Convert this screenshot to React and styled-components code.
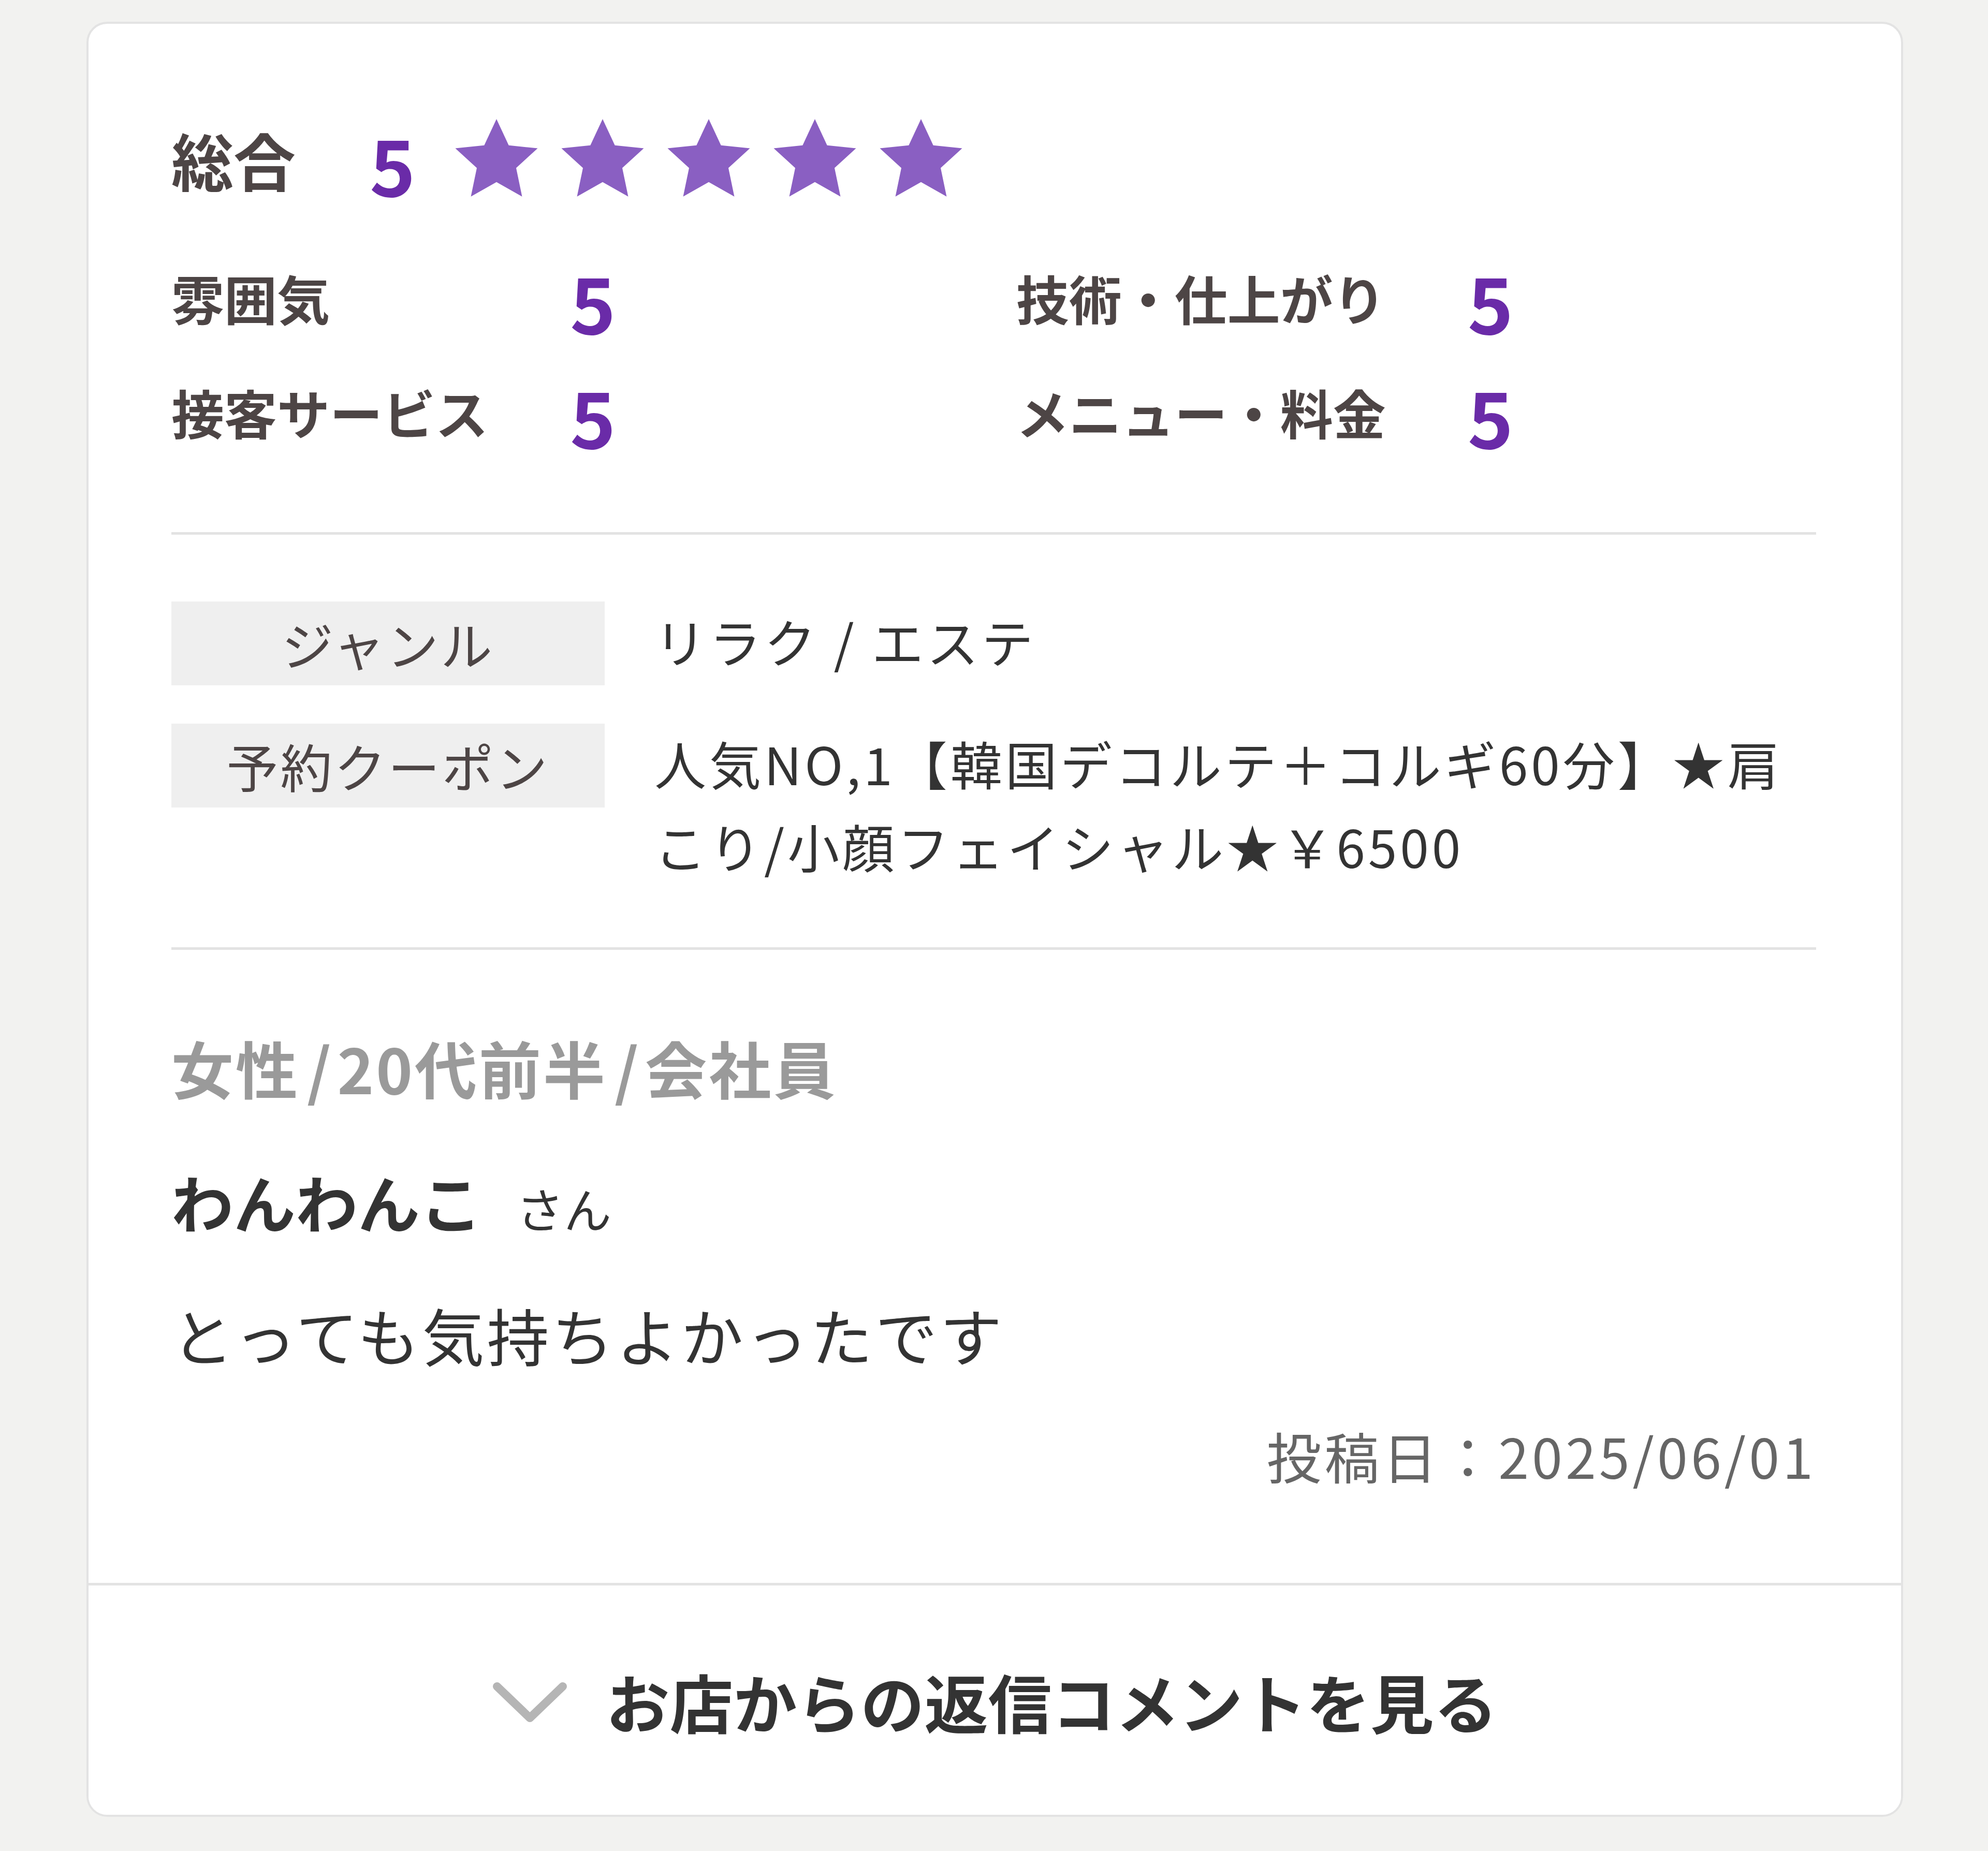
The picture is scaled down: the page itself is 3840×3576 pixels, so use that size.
import React from "react";
import styled, { createGlobalStyle } from "styled-components";

const GlobalStyle = createGlobalStyle`
  html, body {
    margin: 0;
    padding: 0;
    background: #f2f2f0;
  }
  body {
    font-family: "Noto Sans CJK JP", "Noto Sans", sans-serif;
    color: #333;
  }
`;

const scores = [
  { label: "雰囲気", value: 5 },
  { label: "技術・仕上がり", value: 5 },
  { label: "接客サービス", value: 5 },
  { label: "メニュー・料金", value: 5 },
];

const reviewer = ["女性", "20代前半", "会社員"];

const Star = () => (
  <svg width="172" height="162" viewBox="0 0 24 22.6">
    <path
      d="M12 0.4l3.3 7.1 7.8.8-5.8 5.3 1.6 7.7L12 17.4l-6.9 3.9 1.6-7.7L.9 8.3l7.8-.8z"
      fill="#8a5fc2"
    />
  </svg>
);

const Chevron = () => (
  <svg width="145" height="80" viewBox="0 0 145 80">
    <path
      d="M9 9 L72.5 70 L136 9"
      fill="none"
      stroke="#b5b5b5"
      strokeWidth="16"
      strokeLinecap="round"
      strokeLinejoin="round"
    />
  </svg>
);

const App = () => {
  return (
    <Page>
      <GlobalStyle />
      <Card>
        <Body>
          <Overall>
            <OverallLabel>総合</OverallLabel>
            <OverallValue>5</OverallValue>
            <Stars>
              {[0, 1, 2, 3, 4].map((i) => (
                <Star key={i} />
              ))}
            </Stars>
          </Overall>

          <ScoreGrid>
            {scores.map((s) => (
              <React.Fragment key={s.label}>
                <ScoreLabel>{s.label}</ScoreLabel>
                <ScoreValue>{s.value}</ScoreValue>
              </React.Fragment>
            ))}
          </ScoreGrid>

          <Divider $top={157} $bottom={129} />

          <InfoList>
            <InfoRow>
              <InfoLabel>ジャンル</InfoLabel>
              <InfoValue>リラク / エステ</InfoValue>
            </InfoRow>
            <InfoRow>
              <InfoLabel>予約クーポン</InfoLabel>
              <InfoValue>
                人気NO,1【韓国デコルテ＋コルギ60分】★肩こり/小顔フェイシャル★￥6500
              </InfoValue>
            </InfoRow>
          </InfoList>

          <Divider $top={116} $bottom={137} />

          <Reviewer>
            {reviewer.map((part, i) => (
              <React.Fragment key={part}>
                {i > 0 && <Slash>/</Slash>}
                {part}
              </React.Fragment>
            ))}
          </Reviewer>
          <Name>
            わんわんこ<Honorific>さん</Honorific>
          </Name>
          <Comment>とっても気持ちよかったです</Comment>
          <PostDate>投稿日：2025/06/01</PostDate>
        </Body>

        <ReplyButton type="button">
          <Chevron />
          <span>お店からの返信コメントを見る</span>
        </ReplyButton>
      </Card>
    </Page>
  );
};

export default App;

const Page = styled.div`
  padding: 42px 164px 72px 167px;
`;

const Card = styled.div`
  background: #fff;
  border: 4px solid #e3e3e3;
  border-radius: 40px;
  overflow: hidden;
`;

const Body = styled.div`
  padding: 177px 164px 172px 160px;
`;

const Overall = styled.div`
  display: flex;
  align-items: center;
  height: 170px;
  margin-bottom: 107px;
`;

const OverallLabel = styled.div`
  font-size: 120px;
  font-weight: 700;
  color: #4d4545;
  line-height: 1;
  margin-right: 143px;
`;

const OverallValue = styled.div`
  font-size: 150px;
  font-weight: 700;
  color: #6a2ba8;
  line-height: 1;
  margin-right: 70px;
  margin-top: 14px;
`;

const Stars = styled.div`
  display: flex;
  gap: 33px;
  svg {
    display: block;
  }
`;

const ScoreGrid = styled.div`
  display: grid;
  grid-template-columns: auto 1.045fr auto 1fr;
  grid-auto-rows: 150px;
  column-gap: 158px;
  row-gap: 71px;
  align-items: center;
`;

const ScoreLabel = styled.div`
  font-size: 102px;
  font-weight: 700;
  color: #4d4545;
  line-height: 1;
  white-space: nowrap;
`;

const ScoreValue = styled.div`
  font-size: 150px;
  font-weight: 700;
  color: #6a2ba8;
  line-height: 1;
  margin-top: 12px;
`;

const Divider = styled.hr`
  border: 0;
  height: 5px;
  background: #e3e3e3;
  margin: ${(p) => p.$top}px 0 ${(p) => p.$bottom}px;
`;

const InfoList = styled.div`
  display: flex;
  flex-direction: column;
  gap: 74px;
`;

const InfoRow = styled.div`
  display: grid;
  grid-template-columns: 837px 1fr;
  column-gap: 96px;
  align-items: start;
`;

const InfoLabel = styled.div`
  height: 162px;
  background: #efefef;
  color: #4d4545;
  font-size: 100px;
  letter-spacing: 4px;
  line-height: 162px;
  text-align: center;
`;

const InfoValue = styled.div`
  font-size: 100px;
  letter-spacing: 6px;
  line-height: 160px;
  color: #333;
  margin-top: -4px;
`;

const Reviewer = styled.div`
  font-size: 120px;
  font-weight: 700;
  color: #9a9a9a;
  letter-spacing: 4px;
  line-height: 180px;
  margin-bottom: 79px;
`;

const Slash = styled.span`
  margin: 0 8px 0 14px;
`;

const Name = styled.div`
  font-size: 120px;
  font-weight: 700;
  color: #333;
  line-height: 180px;
  margin-bottom: 65px;
`;

const Honorific = styled.span`
  font-size: 92px;
  font-weight: 400;
  margin-left: 66px;
`;

const Comment = styled.div`
  font-size: 120px;
  letter-spacing: 5px;
  color: #333;
  line-height: 180px;
  margin-bottom: 68px;
`;

const PostDate = styled.div`
  font-size: 106px;
  letter-spacing: 6px;
  color: #666;
  line-height: 150px;
  text-align: right;
`;

const ReplyButton = styled.button`
  display: flex;
  align-items: center;
  justify-content: center;
  gap: 75px;
  width: 100%;
  height: 448px;
  border: 0;
  border-top: 5px solid #e3e3e3;
  background: #fff;
  font-family: "Noto Sans CJK JP", "Noto Sans", sans-serif;
  font-size: 123px;
  font-weight: 700;
  color: #333;
  cursor: pointer;
  padding: 0;
  svg {
    display: block;
    margin-top: 8px;
  }
`;
